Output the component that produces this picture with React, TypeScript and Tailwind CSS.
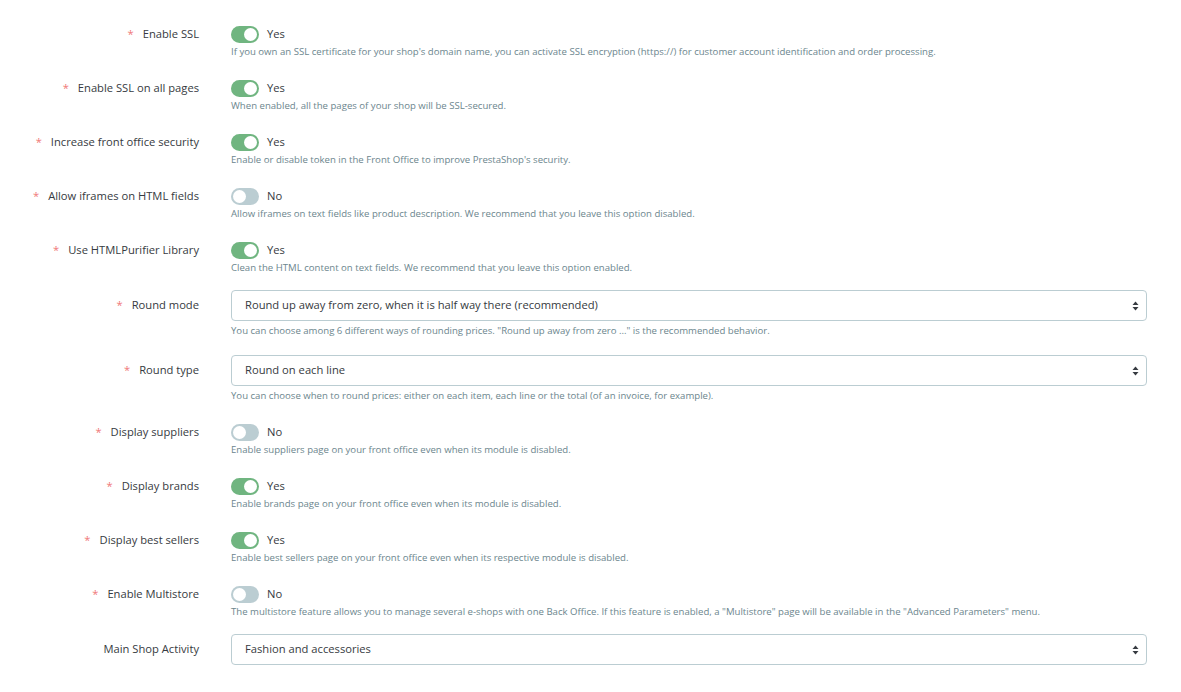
import { Fragment } from "react";

type Row =
  | { kind: "toggle"; label: string; on: boolean; help: string; required?: boolean }
  | { kind: "select"; label: string; value: string; help?: string; required?: boolean };

const rows: Row[] = [
  {
    kind: "toggle",
    label: "Enable SSL",
    on: true,
    required: true,
    help: "If you own an SSL certificate for your shop's domain name, you can activate SSL encryption (https://) for customer account identification and order processing.",
  },
  {
    kind: "toggle",
    label: "Enable SSL on all pages",
    on: true,
    required: true,
    help: "When enabled, all the pages of your shop will be SSL-secured.",
  },
  {
    kind: "toggle",
    label: "Increase front office security",
    on: true,
    required: true,
    help: "Enable or disable token in the Front Office to improve PrestaShop's security.",
  },
  {
    kind: "toggle",
    label: "Allow iframes on HTML fields",
    on: false,
    required: true,
    help: "Allow iframes on text fields like product description. We recommend that you leave this option disabled.",
  },
  {
    kind: "toggle",
    label: "Use HTMLPurifier Library",
    on: true,
    required: true,
    help: "Clean the HTML content on text fields. We recommend that you leave this option enabled.",
  },
  {
    kind: "select",
    label: "Round mode",
    required: true,
    value: "Round up away from zero, when it is half way there (recommended)",
    help: 'You can choose among 6 different ways of rounding prices. "Round up away from zero ..." is the recommended behavior.',
  },
  {
    kind: "select",
    label: "Round type",
    required: true,
    value: "Round on each line",
    help: "You can choose when to round prices: either on each item, each line or the total (of an invoice, for example).",
  },
  {
    kind: "toggle",
    label: "Display suppliers",
    on: false,
    required: true,
    help: "Enable suppliers page on your front office even when its module is disabled.",
  },
  {
    kind: "toggle",
    label: "Display brands",
    on: true,
    required: true,
    help: "Enable brands page on your front office even when its module is disabled.",
  },
  {
    kind: "toggle",
    label: "Display best sellers",
    on: true,
    required: true,
    help: "Enable best sellers page on your front office even when its respective module is disabled.",
  },
  {
    kind: "toggle",
    label: "Enable Multistore",
    on: false,
    required: true,
    help: 'The multistore feature allows you to manage several e-shops with one Back Office. If this feature is enabled, a "Multistore" page will be available in the "Advanced Parameters" menu.',
  },
  {
    kind: "select",
    label: "Main Shop Activity",
    value: "Fashion and accessories",
  },
];

function Switch({ on }: { on: boolean }) {
  return (
    <div
      className={
        "relative h-[17px] w-[28px] rounded-full " + (on ? "bg-[#70b580]" : "bg-[#bbcdd2]")
      }
    >
      <span
        className={
          "absolute top-[2px] h-[13px] w-[13px] rounded-full bg-white " +
          (on ? "left-[13px]" : "left-[2px]")
        }
      />
    </div>
  );
}

function Arrows() {
  return (
    <svg width="7" height="10" viewBox="0 0 7 10" className="text-[#363a41]">
      <path d="M3.5 0.5 L6.5 4 H0.5 Z" fill="currentColor" />
      <path d="M3.5 9.5 L6.5 6 H0.5 Z" fill="currentColor" />
    </svg>
  );
}

export default function App() {
  return (
    <div
      className="min-h-[692px] bg-white pr-[34px] text-[#363a41]"
      style={{ fontFamily: '"Open Sans", "Noto Sans", sans-serif' }}
    >
      <div className="grid grid-cols-[199px_1fr] gap-x-[32px] pt-[22px]">
        {rows.map((row, i) => {
          const nextIsSelect = rows[i + 1]?.kind === "select";
          return (
            <Fragment key={row.label}>
              {row.kind === "toggle" ? (
                <>
                  <div className="flex h-[25px] items-center justify-end text-[11.2px]">
                    {row.required && <span className="mr-[9px] text-[#f07878]">*</span>}
                    <span>{row.label}</span>
                  </div>
                  <div className={(nextIsSelect ? "mb-[15px]" : "mb-[17px]") + " pt-[4px]"}>
                    <div className="flex h-[17px] items-center gap-[8px]">
                      <Switch on={row.on} />
                      <span className="text-[11.2px]">{row.on ? "Yes" : "No"}</span>
                    </div>
                    <p className="mt-[2px] text-[9.6px] leading-[14px] text-[#6c868e]">
                      {row.help}
                    </p>
                  </div>
                </>
              ) : (
                <>
                  <div className="flex h-[31px] items-center justify-end text-[11.2px]">
                    {row.required && <span className="mr-[9px] text-[#f07878]">*</span>}
                    <span>{row.label}</span>
                  </div>
                  <div className="mb-[17px]">
                    <div className="flex h-[31px] items-center justify-between rounded-[4px] border border-[#bbcdd2] pl-[13px] pr-[7px] text-[11.2px]">
                      <span>{row.value}</span>
                      <Arrows />
                    </div>
                    {row.help && (
                      <p className="mt-[3px] text-[9.6px] leading-[14px] text-[#6c868e]">
                        {row.help}
                      </p>
                    )}
                  </div>
                </>
              )}
            </Fragment>
          );
        })}
      </div>
    </div>
  );
}
